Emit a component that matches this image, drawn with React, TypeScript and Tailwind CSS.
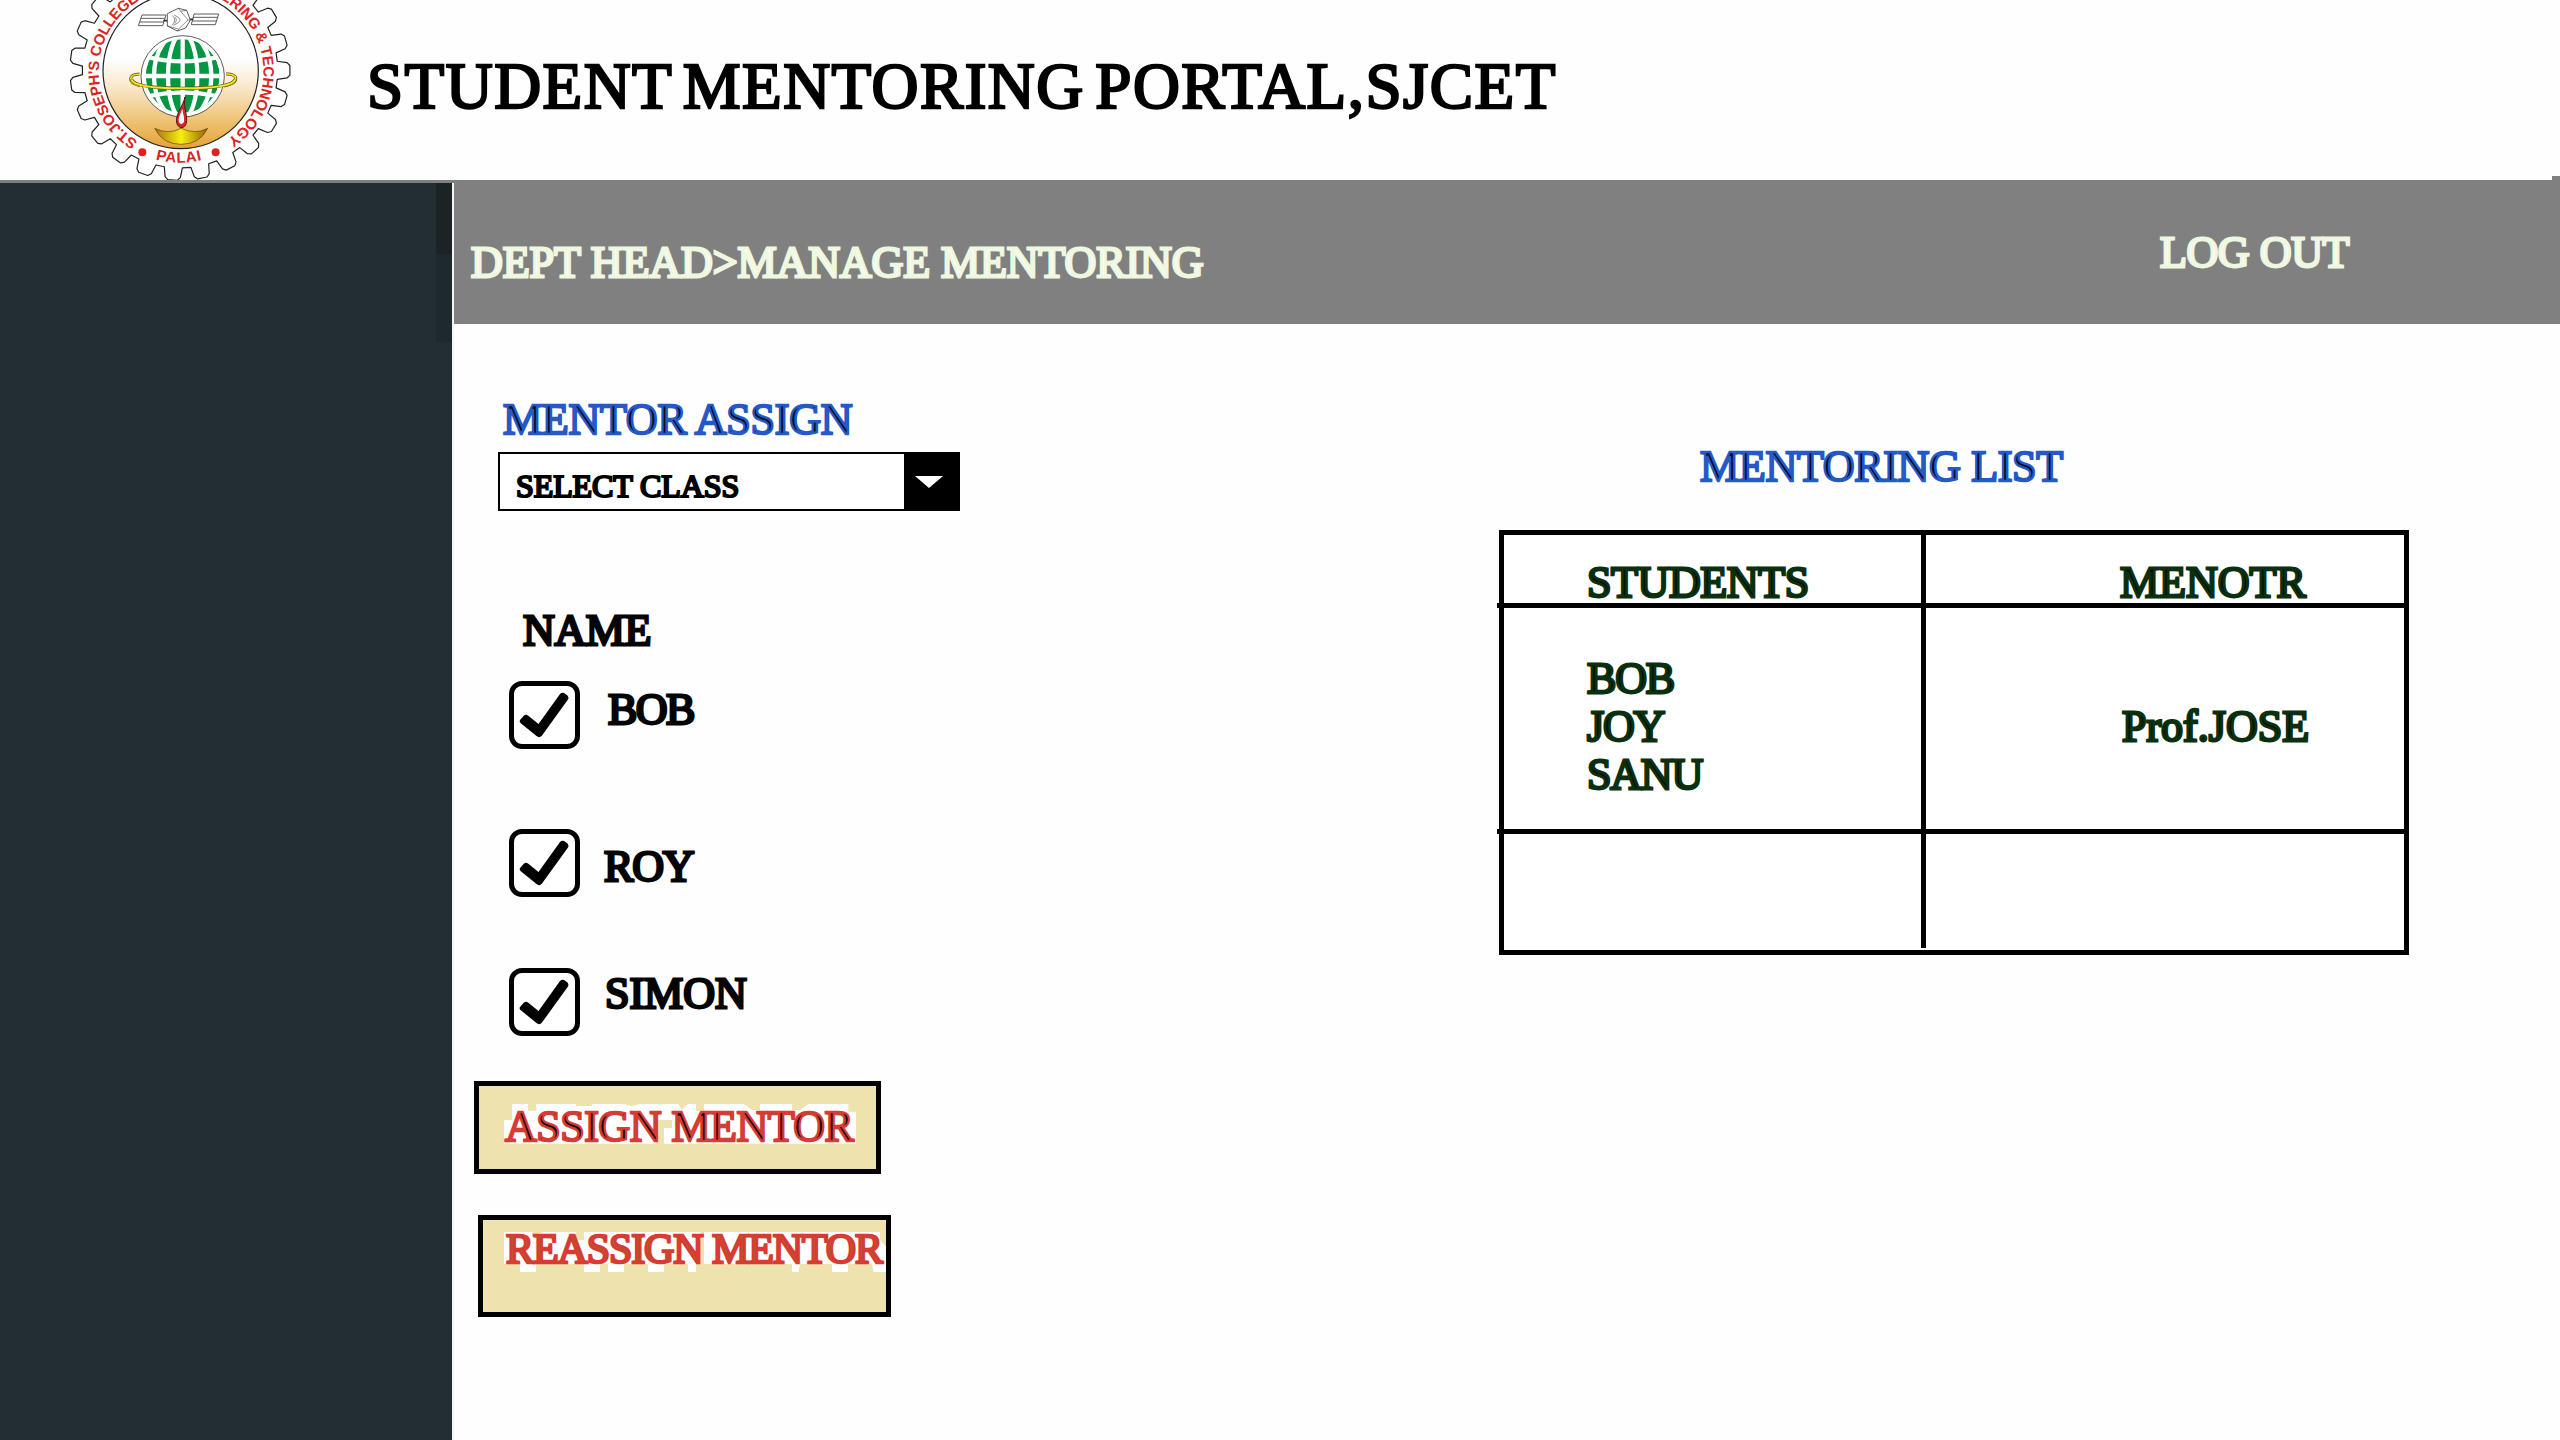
import type { ReactNode } from "react";

const serif = "font-['Liberation_Serif',serif] whitespace-nowrap block";
const body = "text-[44px] leading-[44px]";
const blue = "text-[#030a1c] [-webkit-text-stroke:2.4px_#2459c6]";
const green = "text-[#021003] [-webkit-text-stroke:2.8px_#0a3010]";
const black = "text-black [-webkit-text-stroke:2.8px_#050505]";
const pale = "text-[#fbfdf5] [-webkit-text-stroke:2.8px_#eef7e0]";

function Label({ className, children }: { className: string; children: ReactNode }) {
  return <span className={`${serif} ${className}`}>{children}</span>;
}

/* Outline of the cog wheel: 23 trapezoid teeth round its centre. */
function cogPath() {
  const teeth = 23;
  const step = (Math.PI * 2) / teeth;
  const point = (r: number, a: number) =>
    `${(390 + r * Math.cos(a)).toFixed(1)} ${(211 + r * Math.sin(a)).toFixed(1)}`;
  let d = "";
  for (let i = 0; i < teeth; i++) {
    const a = i * step;
    d += `${i ? "L" : "M"}${point(293, a - step * 0.34)} L${point(322, a - step * 0.26)} L${point(330, a - step * 0.16)} L${point(330, a + step * 0.16)} L${point(322, a + step * 0.26)} L${point(293, a + step * 0.34)} `;
  }
  return d + "Z";
}

function Logo() {
  return (
    <svg viewBox="0 0 780 540" className="block h-[180px] w-[260px] shrink-0">
      <defs>
        <linearGradient id="disc" x1="0" y1="0" x2="0" y2="1">
          <stop offset="0.42" stopColor="#fff" />
          <stop offset="0.6" stopColor="#fae8cb" />
          <stop offset="0.8" stopColor="#f0c67c" />
          <stop offset="1" stopColor="#e5a233" />
        </linearGradient>
        <linearGradient id="lamp">
          <stop offset="0" stopColor="#a87410" />
          <stop offset="0.5" stopColor="#f8ee10" />
          <stop offset="1" stopColor="#94600c" />
        </linearGradient>
        <clipPath id="globe">
          <circle cx="398" cy="228" r="111" />
        </clipPath>
        <path id="ringTop" d="M264 424 A247 247 0 1 1 523 424" />
        <path id="ringBottom" d="M190 402 A276 276 0 0 0 590 402" />
      </defs>
      <path d={cogPath()} fill="#fff" stroke="#222" strokeWidth="3.6" strokeLinejoin="round" />
      <circle cx="392" cy="213" r="233" fill="url(#disc)" stroke="#222" strokeWidth="3.6" />
      <g fill="#dc231e" fontFamily="'Liberation Sans', sans-serif" fontWeight="700">
        <text fontSize="45">
          <textPath href="#ringTop" textLength="1268" lengthAdjust="spacing">
            ST.JOSEPH'S COLLEGE OF ENGINEERING &amp; TECHNOLOGY
          </textPath>
        </text>
        <text fontSize="45" textAnchor="middle" letterSpacing="2">
          <textPath href="#ringBottom" startOffset="49.3%">PALAI</textPath>
        </text>
        <circle cx="277" cy="457" r="12" />
        <circle cx="497" cy="457" r="12" />
      </g>
      <g fill="#fff" stroke="#333" strokeWidth="2.4">
        <path d="M276 45 H348 L338 77 H265 Z M273 55 H344 M270 66 H341 M432 42 H506 L496 74 H424 Z M429 52 H503 M427 63 H500" />
        <path d="M340 62 H352 M414 58 H430" strokeWidth="5" />
        <path d="M352 41 L385 25 L410 31 L421 60 L407 84 L382 93 L352 78 Z" />
        <path d="M385 25 L392 34 L410 31 M392 34 L414 60 L386 87 L352 78 M421 60 H414 M386 87 L382 93 M366 46 Q382 58 366 76 M372 45 Q410 60 370 76 M376 52 Q384 60 374 70" fill="none" strokeWidth="1.6" />
      </g>
      <path d="M268 222 C236 222 230 248 270 257 M528 222 C566 220 570 250 522 258" fill="none" stroke="#5c5510" strokeWidth="9" />
      <path d="M268 222 C236 222 230 248 270 257 M528 222 C566 220 570 250 522 258" fill="none" stroke="#f3e51c" strokeWidth="5" />
      <ellipse cx="398" cy="229" rx="125" ry="122" fill="#fff" stroke="#333" strokeWidth="2.4" />
      <g clipPath="url(#globe)">
        <circle cx="398" cy="228" r="111" fill="#049642" />
        <g fill="none" stroke="#fff" strokeWidth="13">
          <path d="M398 110 V350 M280 228 H520 M296 172 Q398 196 500 172 M296 288 Q398 266 500 288" />
          <ellipse cx="398" cy="228" rx="44" ry="128" />
          <ellipse cx="398" cy="228" rx="86" ry="132" />
        </g>
      </g>
      <path d="M244 238 C250 256 300 265 398 265 C500 265 550 256 556 238" fill="none" stroke="#5c5510" strokeWidth="10" />
      <path d="M244 238 C250 256 300 265 398 265 C500 265 550 256 556 238" fill="none" stroke="#f3e51c" strokeWidth="6" />
      <path d="M314 385 Q356 405 393 385 Q436 405 473 385 Q450 433 393 433 Q338 433 314 385 Z" fill="url(#lamp)" stroke="#5a4210" strokeWidth="2" />
      <path d="M405 291 C399 320 376 340 380 368 Q383 382 396 383 Q409 380 410 362 C411 340 400 322 405 291 Z" fill="#d9262a" stroke="#571010" strokeWidth="3" />
      <path d="M397 326 C390 345 384 354 387 366 Q393 378 402 366 C404 350 398 340 397 326 Z" fill="#fff" />
    </svg>
  );
}

function Checkbox() {
  return (
    <span className="block h-[68px] w-[71px] shrink-0 rounded-[13px] border-[5.5px] border-black bg-white">
      <svg viewBox="0 0 60 57" className="block h-[57px] w-[60px]">
        <path
          d="M6 34 L10 29.5 Q12 28 14 29.5 L24.5 38 L46 8 Q48 6 50 7 L53.500 9.500 Q55 11.500 54 13.500 L28 49.500 Q25.500 52.500 22.500 50 L6.500 37 Q5 35.500 6 34 Z"
          fill="#000"
        />
      </svg>
    </span>
  );
}

function Student({ name, className, nameClass }: { name: string; className: string; nameClass: string }) {
  return (
    <div className={`ml-[55px] flex h-[68px] items-start ${className}`}>
      <Checkbox />
      <Label className={`${body} ${black} ${nameClass}`}>{name}</Label>
    </div>
  );
}

export default function App() {
  return (
    <div className="flex h-[1440px] w-[2560px] flex-col overflow-hidden bg-[#fefefe]">
      <header className="flex h-[180px] shrink-0 items-start bg-[#fefefe]">
        <div className="w-[50px] shrink-0" />
        <Logo />
        <h1 className="ml-[57px] mt-[54px]">
          <Label className="text-[65px] leading-[65px] tracking-[1.45px] text-black [-webkit-text-stroke:2.4px_#000] [word-spacing:-7px]">
            STUDENT MENTORING PORTAL,SJCET
          </Label>
        </h1>
        <div className="ml-auto h-1 w-2 self-end bg-[#808080]" />
      </header>

      <div className="flex grow">
        <aside className="flex w-[452px] shrink-0 justify-end border-t-[3px] border-[#808080] bg-[#232e32]">
          <div className="w-4">
            <div className="h-[71px] bg-[#1b2325]" />
            <div className="h-[88px] bg-[#1f292d]" />
          </div>
        </aside>
        <div className="w-[2px] shrink-0 border-t-[3px] border-[#808080] bg-[#f4f6f6]" />

        <main className="flex grow flex-col">
          <nav className="flex h-[144px] shrink-0 items-start justify-between bg-[#808080] pl-[17px] pr-[211px]">
            <Label className={`${body} ${pale} mt-[61px] tracking-[-0.08px]`}>DEPT HEAD&gt;MANAGE MENTORING</Label>
            <Label className={`${body} ${pale} mt-[51px] tracking-[-0.4px]`}>LOG OUT</Label>
          </nav>

          <div className="flex grow items-start">
            <section className="flex w-[1043px] shrink-0 flex-col items-start">
              <Label className={`${body} ${blue} ml-[49px] mt-[74px] tracking-[-0.25px]`}>MENTOR ASSIGN</Label>
              <div className="ml-[44px] mt-[10px] flex h-[59px] w-[462px] border-2 border-black bg-white">
                <Label className="grow pl-4 pt-4 text-[32px] leading-[32px] tracking-[-0.1px] text-black [-webkit-text-stroke:2.2px_#000]">
                  SELECT CLASS
                </Label>
                <span className="flex w-[54px] items-start justify-center bg-black pr-1 pt-[22px]">
                  <svg viewBox="0 0 28 12" className="block h-3 w-7">
                    <path d="M0 0 H28 L14 12 Z" fill="#fff" />
                  </svg>
                </span>
              </div>

              <Label className={`${body} ${black} ml-[69px] mt-[98px] tracking-[-0.4px]`}>NAME</Label>
              <Student name="BOB" className="mt-[28px]" nameClass="ml-[28px] mt-[7px] tracking-[-1.6px]" />
              <Student name="ROY" className="mt-[80px]" nameClass="ml-[24px] mt-[16px] tracking-[-1.2px]" />
              <Student name="SIMON" className="mt-[71px]" nameClass="ml-[25px] mt-[4px]" />

              <button className="relative ml-[20px] mt-[45px] block h-[93px] w-[407px] border-[5px] border-black bg-[#eee2ae] text-left">
                <svg viewBox="57 78 1191 249" className="absolute left-0 top-0 h-[83px] w-[397px]">
                  <path
                    d="M132 180H156V132H204V152H228V132H348V138H396V132H492L516 138L540 132H655L665 150L684 132H708V152H732V132H852L876 150H900V132H996V150H1020L1044 132H1165V155H1188V251H612V204H636V180H588V251H132Z"
                    fill="#fff"
                  />
                </svg>
                <Label className={`${body} relative -mt-[1px] pl-[26px] tracking-[-0.5px] text-[#100000] [-webkit-text-stroke:2.4px_#d63b34]`}>
                  ASSIGN MENTOR
                </Label>
              </button>
              <button className="relative ml-[24px] mt-[41px] block h-[102px] w-[413px] border-[5px] border-black bg-[#eee2ae] text-left">
                <svg viewBox="69 480 1209 276" className="absolute left-0 top-0 h-[92px] w-[403px]">
                  <path
                    d="M132 516H216V528L252 516H348V540H372V516H722V540H712V612H732V516H1260V540L1278 560V636H1240L1236 612H1164V636H1116V612H1020L1016 636H996V612H708V636H684V612H612V636H564V612H492V636H444V612H420V636H372V612H228V636H180V612H132Z"
                    fill="#fff"
                  />
                </svg>
                <Label className="relative -mt-[35px] pl-[23px] text-[42px] leading-[42px] tracking-[-1.1px] text-[#b5562a] [-webkit-text-stroke:2.6px_#d93b33]">
                  REASSIGN MENTOR
                </Label>
              </button>
            </section>

            <section className="flex flex-col items-start">
              <Label className={`${body} ${blue} ml-[203px] mt-[121px] tracking-[-0.3px]`}>MENTORING LIST</Label>
              <div className="relative ml-[2px] mt-[41px] grid h-[425px] w-[910px] grid-cols-[422px_478px] grid-rows-[73px_226px_116px] border-[5px] border-black bg-white">
                <span className="absolute -left-[7px] top-[68px] h-[5px] w-[3px] bg-black" />
                <span className="absolute -left-[7px] top-[294px] h-[5px] w-[3px] bg-black" />
                <div className="border-b-[5px] border-r-[5px] border-black pl-[83px] pt-[26px]">
                  <Label className={`${body} ${green} tracking-[-0.4px]`}>STUDENTS</Label>
                </div>
                <div className="border-b-[5px] border-black pl-[194px] pt-[26px]">
                  <Label className={`${body} ${green}`}>MENOTR</Label>
                </div>
                <div className="border-b-[5px] border-r-[5px] border-black pl-[83px] pt-[47px]">
                  <Label className={`text-[44px] leading-[48px] ${green} tracking-[-1.2px]`}>
                    BOB
                    <br />
                    JOY
                    <br />
                    SANU
                  </Label>
                </div>
                <div className="border-b-[5px] border-black pl-[196px] pt-[95px]">
                  <Label className={`text-[44px] leading-[48px] ${green}`}>Prof.JOSE</Label>
                </div>
                <div className="h-[114px] border-r-[5px] border-black" />
                <div />
              </div>
            </section>
          </div>
        </main>
      </div>
    </div>
  );
}
